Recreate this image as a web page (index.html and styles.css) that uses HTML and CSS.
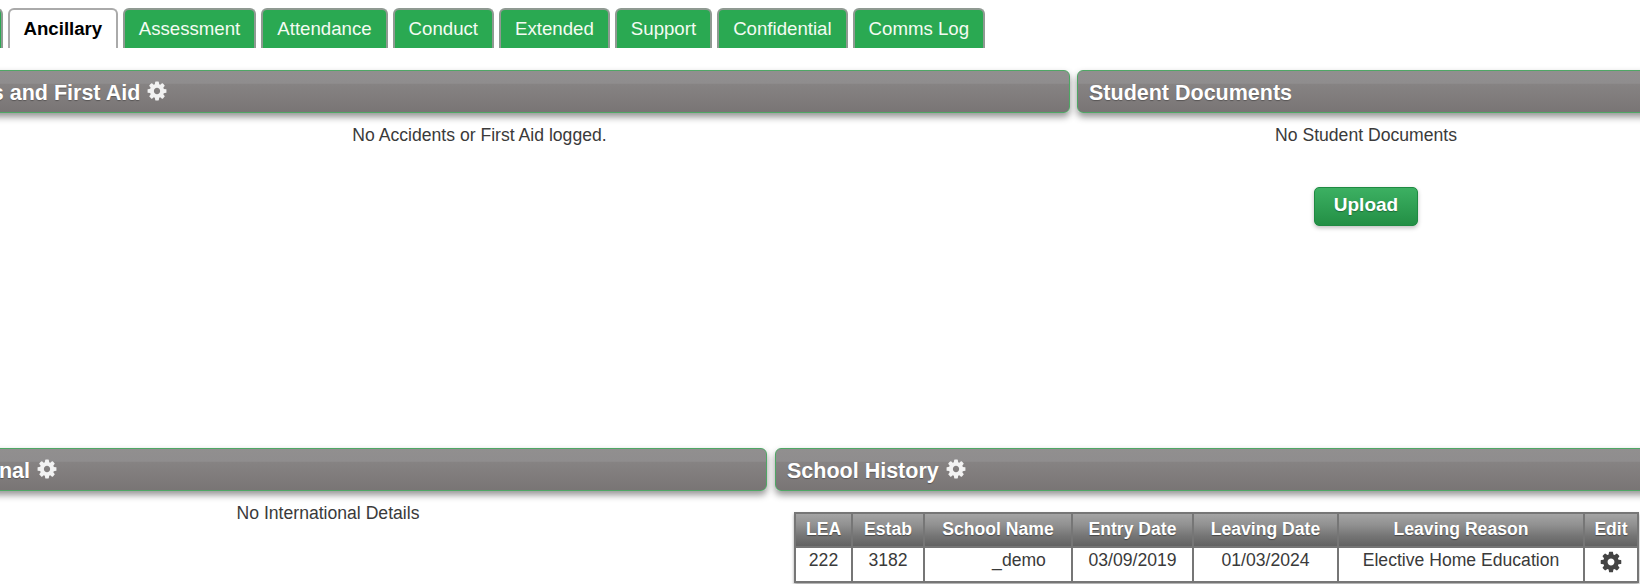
FILE: index.html
```html
<!DOCTYPE html>
<html lang="en">
<head>
<meta charset="utf-8">
<title>Student Record</title>
<link rel="stylesheet" href="styles.css">
</head>
<body>
<svg class="defs" aria-hidden="true"><symbol id="cog" viewBox="0 0 1792 1792"><path d="M1152 896q0-106-75-181t-181-75-181 75-75 181 75 181 181 75 181-75 75-181zm512-109v222q0 12-8 23t-20 13l-185 28q-19 54-39 91 35 50 107 138 10 12 10 25t-9 23q-27 37-99 108t-94 71q-12 0-26-9l-138-108q-44 23-91 38-16 136-29 186-7 28-36 28h-222q-14 0-24.5-8.5t-11.5-21.5l-28-184q-49-16-90-37l-141 107q-10 9-25 9-14 0-25-11-126-114-165-168-7-10-7-23 0-12 8-23 15-21 51-66.5t54-70.5q-27-50-41-99l-183-27q-13-2-21-12.5t-8-23.5v-222q0-12 8-23t19-13l186-28q14-46 39-92-40-57-107-138-10-12-10-24 0-10 9-23 26-36 98.5-107.5t94.5-71.5q13 0 26 10l138 107q44-23 91-38 16-136 29-186 7-28 36-28h222q14 0 24.5 8.5t11.5 21.5l28 184q49 16 90 37l142-107q9-9 24-9 13 0 25 10 129 119 165 170 7 8 7 22 0 12-8 23-15 21-51 66.5t-54 70.5q26 50 41 98l183 28q13 2 21 12.5t8 23.5z"/></symbol></svg>
<div class="page">
  <nav class="tabs">
    <a class="tab tab-cut"></a>
    <a class="tab active">Ancillary</a>
    <a class="tab">Assessment</a>
    <a class="tab">Attendance</a>
    <a class="tab">Conduct</a>
    <a class="tab">Extended</a>
    <a class="tab">Support</a>
    <a class="tab">Confidential</a>
    <a class="tab">Comms Log</a>
  </nav>
  <div class="row row-top">
    <section class="panel">
      <h2 class="panel-head">Accidents and First Aid <svg class="cog"><use href="#cog"/></svg></h2>
      <p class="msg">No Accidents or First Aid logged.</p>
    </section>
    <section class="panel">
      <h2 class="panel-head">Student Documents</h2>
      <p class="msg">No Student Documents</p>
      <div class="actions"><button class="btn" type="button">Upload</button></div>
    </section>
  </div>
  <div class="row row-bottom">
    <section class="panel">
      <h2 class="panel-head">International <svg class="cog"><use href="#cog"/></svg></h2>
      <p class="msg">No International Details</p>
    </section>
    <section class="panel">
      <h2 class="panel-head">School History <svg class="cog"><use href="#cog"/></svg></h2>
      <div class="table-wrap">
        <table class="history">
          <thead>
            <tr>
              <th class="c-lea">LEA</th>
              <th class="c-estab">Estab</th>
              <th class="c-name">School Name</th>
              <th class="c-entry">Entry Date</th>
              <th class="c-leave">Leaving Date</th>
              <th class="c-reason">Leaving Reason</th>
              <th class="c-edit">Edit</th>
            </tr>
          </thead>
          <tbody>
            <tr>
              <td>222</td>
              <td>3182</td>
              <td class="name-cell">_demo</td>
              <td>03/09/2019</td>
              <td>01/03/2024</td>
              <td>Elective Home Education</td>
              <td><svg class="cog cog-dark"><use href="#cog"/></svg></td>
            </tr>
          </tbody>
        </table>
      </div>
    </section>
  </div>
</div>
</body>
</html>
```
FILE: styles.css
```css
html, body {
  margin: 0;
  height: 584px;
  overflow: hidden;
  background: #fff;
}
body {
  font-family: "Liberation Sans", Arial, sans-serif;
  color: #3a3a3a;
  font-size: 17.6px;
}
.defs { display: none; }
.page {
  width: 1766px;
  margin-left: -111px;
}
.tabs {
  display: flex;
  gap: 5px;
  height: 40px;
  padding-top: 8px;
}
.tab {
  box-sizing: border-box;
  height: 40px;
  padding: 0 14px;
  border: 2px solid #8f9a92;
  border-bottom: 0;
  border-radius: 6px 6px 0 0;
  background: #2aa952;
  color: #f4fbf2;
  font-size: 18.65px;
  line-height: 37px;
  white-space: nowrap;
}
.tab-cut {
  width: 114px;
}
.tab.active {
  padding: 0 13.5px;
  background: #fff;
  border-color: #aaa;
  color: #000;
  font-weight: bold;
}
.row { display: grid; }
.row-top {
  grid-template-columns: 1181px 578px;
  column-gap: 7px;
  margin-top: 22px;
  height: 378px;
}
.row-bottom {
  grid-template-columns: 878px 880px;
  column-gap: 8px;
}
.panel-head {
  box-sizing: border-box;
  height: 43px;
  margin: 0;
  padding: 3px 11px 0;
  display: flex;
  align-items: center;
  gap: 6px;
  border: 1px solid #4fa765;
  border-radius: 6px;
  background: linear-gradient(#918f8f 0, #8f8d8e 30%, #868383 32%, #797575 100%);
  box-shadow: 0 4px 7px rgba(0,0,0,.42);
  color: #fff;
  font-size: 21.5px;
  font-weight: bold;
  text-shadow: 0 1px 1px rgba(0,0,0,.3);
}
.cog {
  width: 22px;
  height: 22px;
  fill: #f2f2f2;
  flex: none;
  margin-top: -4px;
}
.cog-dark {
  fill: #444;
  width: 24px;
  height: 24px;
  margin: 2px auto 0;
  display: block;
}
.msg {
  margin: 12px 0 0;
  line-height: 20px;
  text-align: center;
}
.actions {
  display: flex;
  justify-content: center;
  margin-top: 42px;
}
.btn {
  box-sizing: border-box;
  width: 104px;
  height: 39px;
  padding: 0 0 3px;
  border: 1px solid #1f8a42;
  border-radius: 5px;
  background: linear-gradient(#3cb062, #238f45);
  box-shadow: 0 2px 4px rgba(0,0,0,.25);
  color: #fff;
  font-family: inherit;
  font-size: 19px;
  font-weight: bold;
  text-shadow: 0 1px 1px rgba(0,0,0,.3);
}
.table-wrap {
  padding: 21px 18px 0 19px;
}
.history {
  width: 843px;
  table-layout: fixed;
  border-collapse: collapse;
  box-shadow: 0 2px 3px rgba(0,0,0,.35);
}
.history th, .history td {
  border: 2px solid #767676;
  padding: 0;
  text-align: center;
  overflow: hidden;
  white-space: nowrap;
}
.history th {
  height: 30px;
  padding-bottom: 2px;
  background: linear-gradient(#a4a4a4 0, #909090 35%, #747474 70%, #626262 100%);
  color: #fff;
  font-size: 17.6px;
  font-weight: bold;
  text-shadow: 0 1px 1px rgba(0,0,0,.4);
}
.history td {
  height: 33px;
  vertical-align: top;
  line-height: 24px;
}
.c-lea { width: 55px; }
.c-estab { width: 70px; }
.c-name { width: 146px; }
.c-entry { width: 119px; }
.c-leave { width: 143px; }
.c-reason { width: 244px; }
.c-edit { width: 52px; }
.history .name-cell { padding-left: 42px; }
```
